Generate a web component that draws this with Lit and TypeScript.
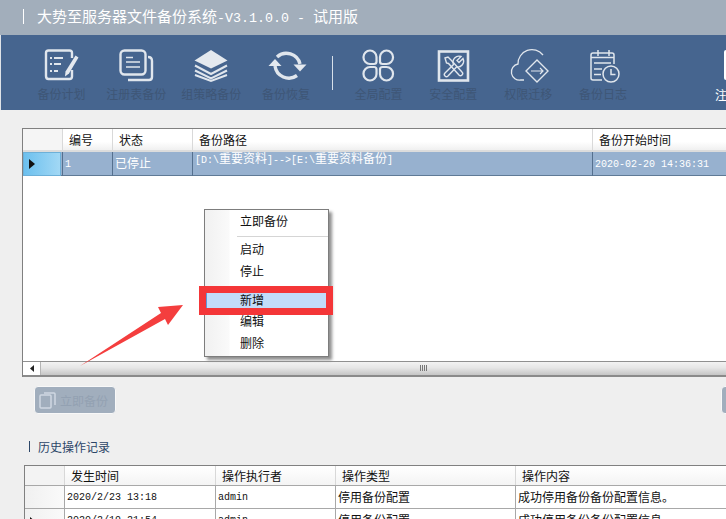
import { LitElement, html, css, svg } from "lit";
import { customElement } from "lit/decorators.js";

const light = "#e4e9ef";
const icons: Record<string, unknown> = {
  plan: svg`<path d="M29 9V4q0-2.500-2.500-2.500H5.500Q3 1.500 3 4v23q0 3 2.500 3h21q2.500 0 2.500-2.500V21" fill="none" stroke-width="2.400"/><path d="M7 9h2M11 9h9M7 15h2M11 15h7M7 22h2M11 22h4" stroke-width="2" fill="none"/><path d="M32.500 6.500l3 2-9.500 16-4 3 .5-5z" fill="${light}" stroke="none"/>`,
  reg: svg`<rect x="2.500" y="1.500" width="25" height="24" rx="4" fill="none" stroke-width="2.400"/><path d="M8 8.500h7M8 13h14M8 18h14" fill="none" stroke-width="1.600"/><path d="M30 8q4 0 4 4v16q0 3-3 3H10" fill="none" stroke-width="2.400"/>`,
  group: svg`<path d="M18 1l16.500 10.500L18 19.500 1.500 11.500z" fill="${light}" stroke="none"/><path d="M2 16.500l16 8.500 16-8.500M2 21.500l16 8 16-8M2 26l16 6 16-6" fill="none" stroke-width="2"/>`,
  sync: svg`<path d="M9 8A14 14 0 0 1 32 15" fill="none" stroke-width="3.400"/><path d="M25.500 15.500h13L32 22.500z" fill="${light}" stroke="none"/><path d="M29 26.500A14 14 0 0 1 7 17" fill="none" stroke-width="3.400"/><path d="M.5 17h13L7 10z" fill="${light}" stroke="none"/>`,
  grid: svg`<g fill="none" stroke-width="2.200"><path d="M16.500 12.500V8a6.500 6.500 0 0 0-13 0v.5a6.500 6.500 0 0 0 6.500 6.500h4a2.500 2.500 0 0 0 2.500-2.500z"/><path d="M20 12.500V8a6.500 6.500 0 0 1 13 0v.5a6.500 6.500 0 0 1-6.500 6.500h-4a2.500 2.500 0 0 1-2.500-2.500z"/><path d="M16.500 20.500V25a6.500 6.500 0 0 1-13 0v-.5A6.500 6.500 0 0 1 10 18h4a2.500 2.500 0 0 1 2.500 2.500z"/><path d="M20 20.500V25a6.500 6.500 0 0 0 13 0v-.5A6.500 6.500 0 0 0 26.500 18h-4a2.500 2.500 0 0 0-2.500 2.500z"/></g>`,
  safe: svg`<rect x="4" y="2.500" width="29" height="29" fill="none" stroke-width="2.600"/><path d="M28 9.500l-4 4-2-2 4-4a6 6 0 0 0-7.500 8L10 24a2 2 0 0 0 3 3l8.500-9a6 6 0 0 0 6.500-8.500z" fill="none" stroke-width="1.400"/><path d="M10 9l3-1 3 3 11 12a2 2 0 0 1-3 3L13.500 14.500l-2-.5z" fill="none" stroke-width="1.400"/>`,
  cloud: svg`<path d="M14 31H11A8 8 0 0 1 8 15 A14 14 0 0 1 33 6" fill="none" stroke-width="1.300"/><path d="M27 11l11 11-11 11-11-11z" fill="none" stroke-width="1.400"/><path d="M21 22h12M30 19l3 3-3 3" fill="none" stroke-width="1.200"/>`,
  log: svg`<path d="M17 31H8q-2 0-2-2V6q0-2 2-2h19q2 0 2 2v9" fill="none" stroke-width="1.500"/><path d="M6 8.500h23M13 1v6M24 1v6M9 14h17M9 20h8M9 25.500h7" fill="none" stroke-width="1.500"/><circle cx="26" cy="25" r="8" fill="none" stroke-width="1.500"/><path d="M26 20v5.500h4.500" fill="none" stroke-width="1.500"/>`,
};

const tools = [
  ["plan", "备份计划"],
  ["reg", "注册表备份"],
  ["group", "组策略备份"],
  ["sync", "备份恢复"],
  null,
  ["grid", "全局配置"],
  ["safe", "安全配置"],
  ["cloud", "权限迁移"],
  ["log", "备份日志"],
] as const;

@customElement("app-root")
export class AppRoot extends LitElement {
  static styles = css`
    :host { display: block; width: 726px; height: 519px; overflow: hidden; position: relative; background: #efefef; color: #111; font: 12px "Noto Sans CJK SC", sans-serif; }
    .title { height: 35px; background: #a2aebb; color: #fff; display: flex; align-items: center; padding-left: 23px; gap: 13px; font: 15px/30px "Noto Sans CJK SC", sans-serif; white-space: nowrap; box-sizing: border-box; padding-bottom: 3px; }
    .title i { width: 1px; height: 15px; background: #fff; }
    .title em { font: 13.33px "Liberation Mono", monospace; }
    .toolbar { height: 75px; background: #46658f; border-left: 1px solid #dfe3e8; box-sizing: border-box; display: flex; padding-left: 23px; position: relative; }
    .tool { width: 74.9px; flex: none; display: flex; flex-direction: column; align-items: center; padding-top: 14px; box-sizing: border-box; }
    .tool svg { width: 36px; height: 34px; stroke: #e0e6ed; overflow: visible; }
    .tool span { margin-top: 3px; font-size: 12px; line-height: 16px; color: #3e5676; white-space: nowrap; }
    .tsep { width: 1px; height: 34px; margin: 21px 8px 0 8.400px; background: #d7e0ea; flex: none; }
    .tool.last { margin-left: 49px; }
    .tool.last b { width: 18px; height: 30px; margin: 1px 0 0 12px; background: #fff; border-radius: 2px; display: block; }
    .tool.last span { color: #fff; margin-top: 7px; }
    .content { padding: 18px 0 0 22px; }
    .grid1 { border: 1px solid #808080; border-right: 0; border-bottom: 0; height: 249px; width: 720px; background: #fff; display: flex; flex-direction: column; box-sizing: border-box; position: relative; }
    .row { display: grid; flex: none; white-space: nowrap; }
    .c1 { grid-template-columns: 39px 50px 80px 400px 140px; }
    .hd { height: 23px; background: linear-gradient(#fff, #fff 60%, #f0f0f0); border-bottom: 2px solid #dcdcdc; box-sizing: border-box; line-height: 21px; }
    .hd > div { padding-left: 6px; border-left: 1px solid #d9d9d9; }
    .hd > div:first-child { border-left: 0; background: #f5f5f5; }
    .sel { height: 24px; background: #97b1cf; color: #fff; border-bottom: 1px solid #5f7a96; box-sizing: border-box; }
    .sel > div { border-left: 1px solid #55708e; padding-left: 2px; }
    .sel .rh { border: 1px solid #6db0d8; margin-right: 1px; background: linear-gradient(90deg, #6cc0ee, #a2d8f5); padding: 0; display: flex; align-items: center; box-sizing: border-box; }
    .rh svg { margin-left: 5px; }
    .mono { font: 10px/18px "Liberation Mono", "Noto Sans CJK SC", monospace; }
    .cj { font: 12px/1 "Noto Sans CJK SC", sans-serif; }
    .sel .t { font-size: 12px; line-height: 22px; }
    .sel .mono.low { line-height: 22px; padding-top: 2px; font-size: 10px; }
    .sel .path { line-height: 16px; }
    .spacer { flex: 1; }
    .hbar { height: 16px; display: flex; border-top: 1px solid #909090; border-bottom: 2px double #8a8a8a; box-sizing: border-box; background: linear-gradient(#f3f3f3, #e6e6e6 45%, #c5c5c5); position: relative; }
    .hbar .left { width: 18px; background: #fff; border-right: 1px solid #b5b5b5; display: flex; align-items: center; justify-content: center; box-sizing: border-box; flex: none; }
    .hbar .grip { position: absolute; left: 397px; top: 3px; width: 7px; height: 6px; background: repeating-linear-gradient(90deg, #777 0 1px, transparent 1px 2px); }
    .actions { display: flex; justify-content: space-between; margin: 9px 0 0 12px; height: 28px; }
    .btn { width: 82px; height: 28px; box-sizing: border-box; border: 1px solid #f8f8f8; border-radius: 4px; background: #a1aebd; color: #93a1b2; display: flex; align-items: center; padding-left: 4px; gap: 3px; }
    .btn.r { width: 20px; margin-right: -15px; flex: none; }
    .btn svg { flex: none; }
    .hist { margin: 25px 0 0 7px; display: flex; align-items: center; gap: 8px; height: 14px; color: #2c4668; }
    .hist i { width: 1px; height: 11px; background: #2c4668; }
    .grid2 { margin: 12px 0 0 2px; width: 720px; border: 1px solid #808080; border-right: 0; border-bottom: 0; background: #fff; height: 60px; box-sizing: border-box; }
    .c2 { grid-template-columns: 39px 151px 120px 180px 230px; }
    .hd2 { height: 20px; background: linear-gradient(#fff, #f4f4f4); border-bottom: 1px solid #a8a8a8; box-sizing: border-box; line-height: 19px; }
    .hd2 > div { padding-left: 6px; border-left: 1px solid #d8d8d8; }
    .hd2 > div:first-child { border-left: 0; background: #f3f3f3; }
    .r2 { height: 23px; border-bottom: 1px solid #a8a8a8; box-sizing: border-box; line-height: 22px; }
    .r2 > div { padding-left: 2px; border-left: 1px solid #a8a8a8; overflow: hidden; }
    .r2 > .rh { border-left: 0; background: linear-gradient(90deg, #f0f0f0, #fafafa); padding: 0; }
    .r2 .rh svg { display: block; margin-top: 8px; }
    .r2 .mono { line-height: 24px; }
    .menu { position: absolute; left: 204px; top: 209px; width: 125px; height: 148px; box-sizing: border-box; border: 1px solid #7d7d7d; background: linear-gradient(90deg, #f1f1f1, #fafafa 24px, #fff 25px); box-shadow: 3px 3px 3px #8f8f8f; padding-left: 35px; line-height: 22px; }
    .menu div { height: 22px; }
    .menu hr { margin: 4px 0 1px -3px; border: 0; border-top: 1px solid #d5d5d5; }
    .menu .gap { height: 6px; }
    .mark { position: absolute; left: 199px; top: 286px; width: 134px; height: 29px; box-sizing: border-box; border: 7px solid #f43638; background: #c2dcf9; box-shadow: inset 1px 0 #5b97d8; }
    .marktext { position: absolute; left: 240px; top: 289px; line-height: 22px; }
    .arrow { position: absolute; left: 0; top: 0; width: 726px; height: 519px; pointer-events: none; }
  `;

  render() {
    const arrow = html`<svg width="7" height="10" viewBox="0 0 7 10"><path d="M0 0l6 5-6 5z" fill="#111"/></svg>`;
    return html`
      <div class="title"><i></i><span>大势至服务器文件备份系统<em>-V3.1.0.0 - </em>试用版</span></div>
      <div class="toolbar">
        ${tools.map((t) =>
          t
            ? html`<div class="tool"><svg viewBox="0 0 36 34">${icons[t[0]]}</svg><span>${t[1]}</span></div>`
            : html`<div class="tsep"></div>`
        )}
        <div class="tool last"><b></b><span>注册</span></div>
      </div>
      <div class="content">
        <div class="grid1">
          <div class="row c1 hd"><div></div><div>编号</div><div>状态</div><div>备份路径</div><div>备份开始时间</div></div>
          <div class="row c1 sel">
            <div class="rh">${arrow}</div>
            <div class="mono low">1</div>
            <div class="t">已停止</div>
            <div class="mono path">[D:\\<span class="cj">重要资料</span>]--&gt;[E:\\<span class="cj">重要资料备份</span>]</div>
            <div class="mono low">2020-02-20 14:36:31</div>
          </div>
          <div class="spacer"></div>
          <div class="hbar"><div class="left"><svg width="4" height="7" viewBox="0 0 4 7"><path d="M4 0L0 3.500 4 7z" fill="#222"/></svg></div><div class="grip"></div></div>
        </div>
        <div class="actions">
          <div class="btn">
            <svg width="18" height="18" viewBox="0 0 18 18" fill="none" stroke="#cfd8e2" stroke-width="1.500"><rect x="1" y="4" width="11" height="13" rx="1"/><path d="M5 2h10q1 0 1 1v11"/></svg>
            <span>立即备份</span>
          </div>
          <div class="btn r"></div>
        </div>
        <div class="hist"><i></i><span>历史操作记录</span></div>
        <div class="grid2">
          <div class="row c2 hd2"><div></div><div>发生时间</div><div>操作执行者</div><div>操作类型</div><div>操作内容</div></div>
          <div class="row c2 r2"><div class="rh"></div><div class="mono">2020/2/23 13:18</div><div class="mono">admin</div><div>停用备份配置</div><div>成功停用备份备份配置信息。</div></div>
          <div class="row c2 r2"><div class="rh">${arrow}</div><div class="mono">2020/2/19 21:54</div><div class="mono">admin</div><div>停用备份配置</div><div>成功停用备份备份配置信息。</div></div>
        </div>
      </div>
      <div class="menu">
        <div>立即备份</div><hr />
        <div>启动</div><div>停止</div><div class="gap"></div>
        <div>新增</div><div>编辑</div><div>删除</div>
      </div>
      <div class="mark"></div><div class="marktext">新增</div>
      <svg class="arrow" viewBox="0 0 726 519"><path d="M80 366L161 313 158 307 183 305 168 325 165 319z" fill="#f43e3e"/></svg>
    `;
  }
}
